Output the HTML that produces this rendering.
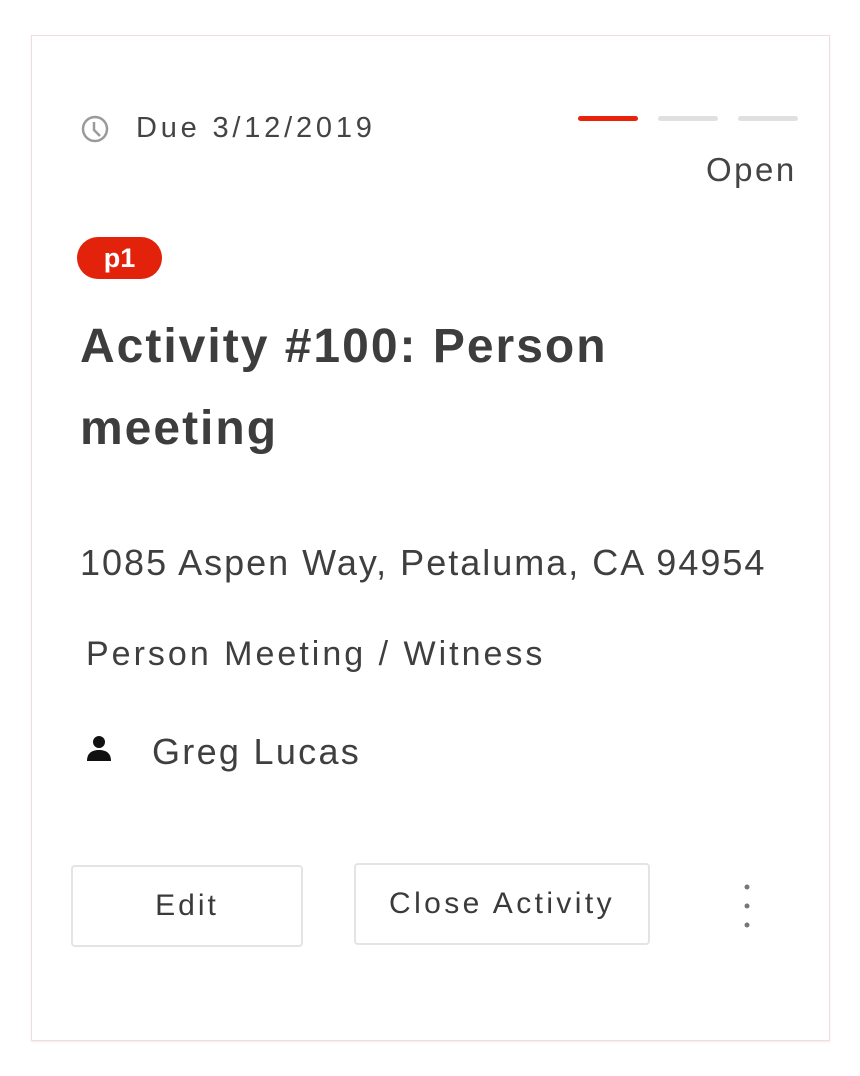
<!DOCTYPE html>
<html><head><style>
body{margin:0;width:860px;height:1076px;background:#fff;font-family:"Liberation Sans",sans-serif;color:#3d3d3d;position:relative;overflow:hidden}
.a{position:absolute;white-space:nowrap}
.card{position:absolute;left:31px;top:35px;width:797px;height:1004px;border:1px solid #f0dede;box-shadow:0 1px 2px rgba(230,200,200,.4)}
.btn{position:absolute;border:2px solid #e4e4e4;border-radius:4px;background:#fff;font-size:30px;color:#3a3a3a;display:flex;align-items:center;justify-content:center;box-sizing:border-box}
.bar{position:absolute;top:116px;height:5px;width:60px;border-radius:3px}
</style></head><body>
<div class="card"></div>
<svg class="a" style="left:80px;top:114px" width="30" height="30" viewBox="0 0 30 30"><circle cx="15" cy="15" r="12" fill="none" stroke="#9a9a9a" stroke-width="2.5"/><path d="M14 8v8l6 6" fill="none" stroke="#9a9a9a" stroke-width="2.5"/></svg>
<div class="a" style="left:136px;top:112px;font-size:29px;letter-spacing:3.8px;color:#444">Due 3/12/2019</div>
<div class="bar" style="left:578px;background:#e8230a"></div>
<div class="bar" style="left:658px;background:#e2dfe0"></div>
<div class="bar" style="left:738px;background:#e2dfe0"></div>
<div class="a" style="left:706px;top:151px;font-size:33px;letter-spacing:2.5px;color:#444">Open</div>
<div class="a" style="left:77px;top:237px;width:85px;height:42px;border-radius:21px;background:#e3220b;color:#fff;font-size:27px;font-weight:bold;text-align:center;line-height:42px">p1</div>
<div class="a" style="left:80px;top:306px;font-size:48px;font-weight:bold;line-height:82px;letter-spacing:2px;color:#3d3d3d">Activity #100: Person<br>meeting</div>
<div class="a" style="left:80px;top:542px;font-size:36px;letter-spacing:2px;color:#3f3f3f">1085 Aspen Way, Petaluma, CA 94954</div>
<div class="a" style="left:86px;top:635px;font-size:34px;letter-spacing:3px;color:#3f3f3f">Person Meeting / Witness</div>
<svg class="a" style="left:86px;top:734px" width="26" height="28" viewBox="0 0 26 28"><circle cx="13" cy="8" r="6" fill="#111"/><path d="M1 27c0-8 5-11 12-11s12 3 12 11z" fill="#111"/></svg>
<div class="a" style="left:152px;top:731px;font-size:36px;letter-spacing:2.3px;color:#3f3f3f">Greg Lucas</div>
<div class="btn" style="left:71px;top:865px;width:232px;height:82px;letter-spacing:3px">Edit</div>
<div class="btn" style="left:354px;top:863px;width:296px;height:82px;letter-spacing:3.4px">Close Activity</div>
<svg class="a" style="left:740px;top:882px" width="14" height="48"><circle cx="7" cy="5" r="2.5" fill="#777"/><circle cx="7" cy="24" r="2.5" fill="#777"/><circle cx="7" cy="43" r="2.5" fill="#777"/></svg>
</body></html>
